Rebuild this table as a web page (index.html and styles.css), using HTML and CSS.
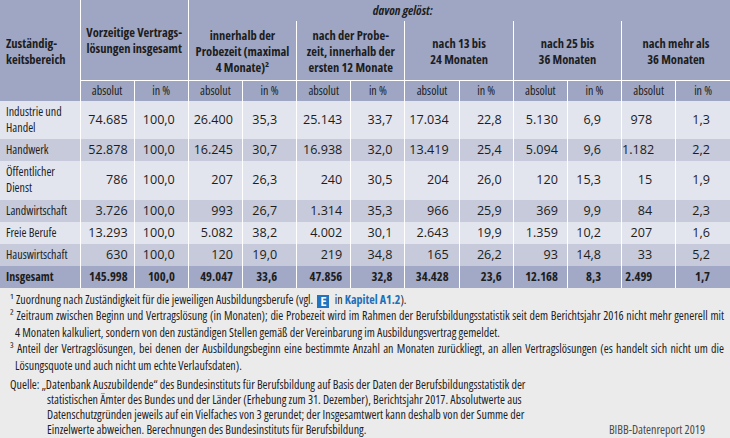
FILE: index.html
```html
<!DOCTYPE html>
<html lang="de">
<head>
<meta charset="utf-8">
<title>Vorzeitige Vertragslösungen</title>
<link rel="stylesheet" href="styles.css">
</head>
<body>
<div class="page">
  <table class="tbl">
    <colgroup><col class="c-label"><col span="12"></colgroup>
    <thead>
      <tr class="h1">
        <th rowspan="3" class="lab">Zuständig-<br>keitsbereich</th>
        <th colspan="2" rowspan="2" class="grp grp-total">Vorzeitige Vertrags-<br>lösungen insgesamt</th>
        <th colspan="10" class="davon">davon gelöst:</th>
      </tr>
      <tr class="h2">
        <th colspan="2" class="grp">innerhalb der<br>Probezeit (maximal<br>4 Monate)²</th>
        <th colspan="2" class="grp">nach der Probe-<br>zeit, innerhalb der<br>ersten 12 Monate</th>
        <th colspan="2" class="grp">nach 13 bis<br>24 Monaten</th>
        <th colspan="2" class="grp">nach 25 bis<br>36 Monaten</th>
        <th colspan="2" class="grp">nach mehr als<br>36 Monaten</th>
      </tr>
      <tr class="h3">
        <th>absolut</th><th>in %</th>
        <th>absolut</th><th>in %</th>
        <th>absolut</th><th>in %</th>
        <th>absolut</th><th>in %</th>
        <th>absolut</th><th>in %</th>
        <th>absolut</th><th>in %</th>
      </tr>
    </thead>
    <tbody>
      <tr class="light">
        <td>Industrie und<br>Handel</td>
        <td>74.685</td><td>100,0</td><td>26.400</td><td>35,3</td><td>25.143</td><td>33,7</td><td>17.034</td><td>22,8</td><td>5.130</td><td>6,9</td><td>978</td><td>1,3</td>
      </tr>
      <tr class="dark">
        <td>Handwerk</td>
        <td>52.878</td><td>100,0</td><td>16.245</td><td>30,7</td><td>16.938</td><td>32,0</td><td>13.419</td><td>25,4</td><td>5.094</td><td>9,6</td><td>1.182</td><td>2,2</td>
      </tr>
      <tr class="light tall">
        <td>Öffentlicher<br>Dienst</td>
        <td>786</td><td>100,0</td><td>207</td><td>26,3</td><td>240</td><td>30,5</td><td>204</td><td>26,0</td><td>120</td><td>15,3</td><td>15</td><td>1,9</td>
      </tr>
      <tr class="dark">
        <td>Landwirtschaft</td>
        <td>3.726</td><td>100,0</td><td>993</td><td>26,7</td><td>1.314</td><td>35,3</td><td>966</td><td>25,9</td><td>369</td><td>9,9</td><td>84</td><td>2,3</td>
      </tr>
      <tr class="light">
        <td>Freie Berufe</td>
        <td>13.293</td><td>100,0</td><td>5.082</td><td>38,2</td><td>4.002</td><td>30,1</td><td>2.643</td><td>19,9</td><td>1.359</td><td>10,2</td><td>207</td><td>1,6</td>
      </tr>
      <tr class="dark">
        <td>Hauswirtschaft</td>
        <td>630</td><td>100,0</td><td>120</td><td>19,0</td><td>219</td><td>34,8</td><td>165</td><td>26,2</td><td>93</td><td>14,8</td><td>33</td><td>5,2</td>
      </tr>
      <tr class="total">
        <td>Insgesamt</td>
        <td>145.998</td><td>100,0</td><td>49.047</td><td>33,6</td><td>47.856</td><td>32,8</td><td>34.428</td><td>23,6</td><td>12.168</td><td>8,3</td><td>2.499</td><td>1,7</td>
      </tr>
    </tbody>
  </table>

  <div class="notes">
    <div class="fn">¹ Zuordnung nach Zuständigkeit für die jeweiligen Ausbildungsberufe (vgl. <span class="e-icon">E</span> in <span class="link">Kapitel A1.2</span>).</div>
    <div class="fn just">² Zeitraum zwischen Beginn und Vertragslösung (in Monaten); die Probezeit wird im Rahmen der Berufsbildungsstatistik seit dem Berichtsjahr 2016 nicht mehr generell mit</div>
    <div class="fn cont">4 Monaten kalkuliert, sondern von den zuständigen Stellen gemäß der Vereinbarung im Ausbildungsvertrag gemeldet.</div>
    <div class="fn just">³ Anteil der Vertragslösungen, bei denen der Ausbildungsbeginn eine bestimmte Anzahl an Monaten zurückliegt, an allen Vertragslösungen (es handelt sich nicht um die</div>
    <div class="fn cont">Lösungsquote und auch nicht um echte Verlaufsdaten).</div>

    <div class="src">
      <div class="src-line">Quelle: „Datenbank Auszubildende“ des Bundesinstituts für Berufsbildung auf Basis der Daten der Berufsbildungsstatistik der</div>
      <div class="src-line src-cont">statistischen Ämter des Bundes und der Länder (Erhebung zum 31. Dezember), Berichtsjahr 2017. Absolutwerte aus</div>
      <div class="src-line src-cont">Datenschutzgründen jeweils auf ein Vielfaches von 3 gerundet; der Insgesamtwert kann deshalb von der Summe der</div>
      <div class="src-line src-cont src-last"><span>Einzelwerte abweichen. Berechnungen des Bundesinstituts für Berufsbildung.</span><span class="credit">BIBB-Datenreport 2019</span></div>
    </div>
  </div>
</div>
</body>
</html>
```
FILE: styles.css
```css
* { box-sizing: border-box; }

html, body { margin: 0; padding: 0; }

body {
  width: 730px;
  height: 438px;
  overflow: hidden;
  background: #ebebeb;
  color: #1d1d1d;
  font-family: "Open Sans", "Liberation Sans", sans-serif;
  font-stretch: 75%;
  font-size: 12px;
}

.page { width: 730px; }

/* ---------- table ---------- */
.tbl {
  width: 730px;
  border-collapse: collapse;
  table-layout: fixed;
}
.tbl col.c-label { width: 80px; }

.tbl th,
.tbl td {
  padding: 0;
  border: 0;
  border-left: 1px solid #ffffff;
}

.tbl thead th {
  background: #9ea6c3;
  font-weight: 700;
  font-size: 12.5px;
  line-height: 16px;
  text-align: center;
  vertical-align: middle;
  white-space: nowrap;
}

.h1 { height: 21px; }
.h2 { height: 59px; }
.h3 { height: 21px; }

.tbl thead th.lab {
  border-left: 0;
  text-align: left;
  padding-left: 6px;
  padding-top: 2px;
}

.tbl thead th.grp-total { padding-top: 4px; }
.tbl thead th.grp { padding-top: 3px; }

.tbl thead th.davon {
  font-style: italic;
  text-align: left;
  padding-left: 184px;
  vertical-align: middle;
}

.tbl .h3 th {
  font-weight: 400;
  font-size: 12px;
  border-top: 1px solid #ffffff;
}

.tbl tbody td {
  padding: 3px 0;
  line-height: 16px;
  vertical-align: middle;
  white-space: nowrap;
  text-align: right;
  font-size: 12.6px;
  font-stretch: 88%;
}

.tbl tbody .tall td { padding-bottom: 4px; }

.tbl tbody td:first-child {
  border-left: 0;
  text-align: left;
  padding-left: 6px;
  font-size: 12px;
  font-stretch: 75%;
}

.tbl tbody td:nth-child(2)  { padding-right: 6px; }
.tbl tbody td:nth-child(3)  { padding-right: 13px; }
.tbl tbody td:nth-child(4)  { padding-right: 9px; }
.tbl tbody td:nth-child(5)  { padding-right: 19px; }
.tbl tbody td:nth-child(6)  { padding-right: 8px; }
.tbl tbody td:nth-child(7)  { padding-right: 12px; }
.tbl tbody td:nth-child(8)  { padding-right: 10px; }
.tbl tbody td:nth-child(9)  { padding-right: 11px; }
.tbl tbody td:nth-child(10) { padding-right: 9px; }
.tbl tbody td:nth-child(11) { padding-right: 20px; }
.tbl tbody td:nth-child(12) { padding-right: 23px; }
.tbl tbody td:nth-child(13) { padding-right: 20px; }

.light td { background: #e3e5ee; }
.dark td { background: #c6cadb; }
.total td {
  background: #a1a9c6;
  font-weight: 700;
  padding-top: 3.5px;
  padding-bottom: 3.5px;
}
.tbl tbody .total td:not(:first-child) { font-stretch: 84%; }

/* ---------- notes ---------- */
.notes {
  padding: 3.5px 6px 0 10px;
}

.fn {
  height: 16.5px;
  line-height: 16.5px;
  white-space: nowrap;
}
.fn.cont { padding-left: 5px; }
.fn.just {
  text-align: justify;
  text-align-last: justify;
}

.e-icon {
  display: inline-block;
  width: 12px;
  height: 13px;
  margin: 0 3px 0 2px;
  background: #1f75bf;
  color: #ffffff;
  font-weight: 700;
  font-size: 11.5px;
  font-stretch: 100%;
  line-height: 13px;
  text-align: center;
  vertical-align: -2px;
}

.link {
  color: #1f6fb8;
  font-weight: 700;
}

.src {
  margin-top: 3px;
}
.src-line {
  height: 15px;
  line-height: 15px;
  white-space: nowrap;
}
.src-cont { padding-left: 37px; }
.src-last {
  display: flex;
  justify-content: space-between;
  padding-right: 19px;
}
.credit { color: #4a4a4a; }
```
